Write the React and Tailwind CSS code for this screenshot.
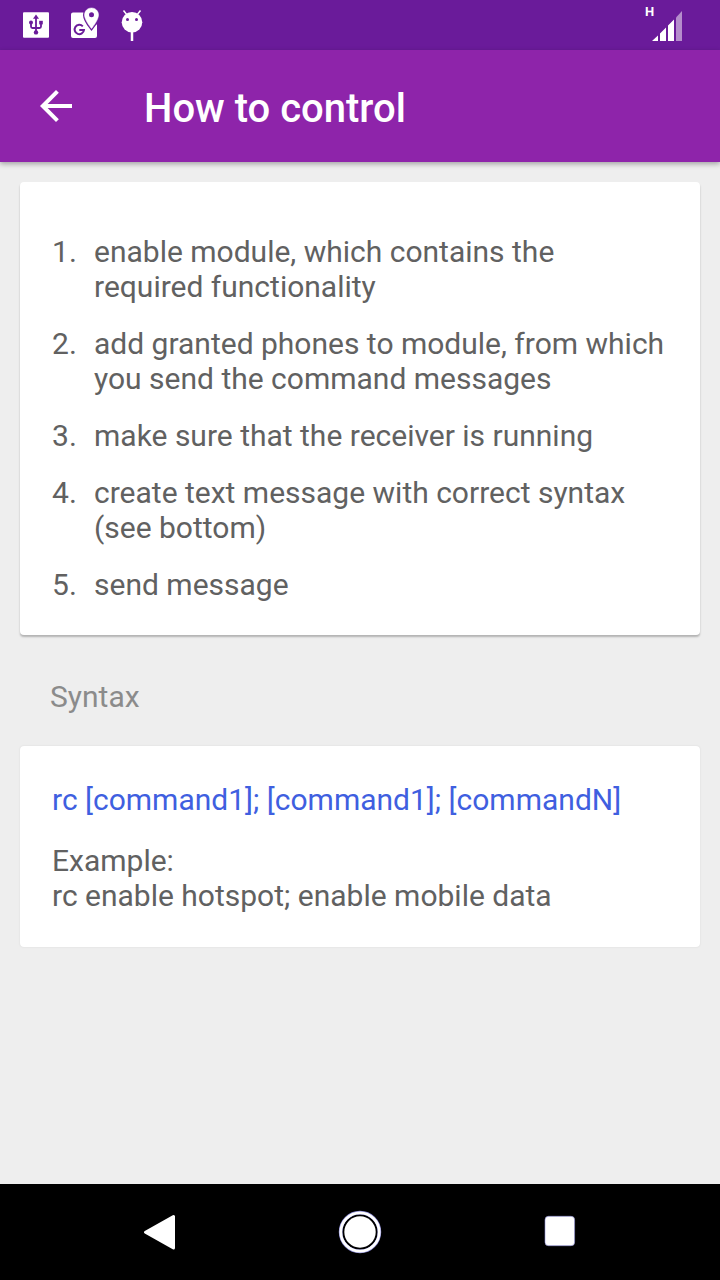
const steps = [
  ['enable module, which contains the', 'required functionality'],
  ['add granted phones to module, from which', 'you send the command messages'],
  ['make sure that the receiver is running'],
  ['create text message with correct syntax', '(see bottom)'],
  ['send message'],
];

const pin = 'M91.5 8c-4 0-7 3-7 7 0 5 7 13.600 7 13.600s7-8.600 7-13.600c0-4-3-7-7-7z';

function StatusBar() {
  return (
    <div className="flex h-[50px] shrink-0 justify-between bg-[#6a1b9a]">
      <svg width="160" height="50" viewBox="0 0 160 50" fill="none">
        <rect x="23" y="12.3" width="26" height="25.5" rx="1" fill="#fff" />
        <g stroke="#6a1b9a" strokeWidth="1.8">
          <path d="M36 17v15M31 23v3.5q0 1.5 1.5 1.5h7q1.5 0 1.5-1.5V23" />
        </g>
        <g fill="#6a1b9a">
          <path d="M36 14.5l3 4.200h-6z" />
          <circle cx="36" cy="32.400" r="2.200" />
          <circle cx="31" cy="22.600" r="2" />
          <rect x="39.200" y="20.800" width="3.600" height="3.600" />
        </g>
        <path d="M73 12.500h16v12h8v11.500q0 2-2 2H73q-2 0-2-2v-21.500q0-2 2-2z" fill="#fff" />
        <path d="M82.800 26.300a4.700 4.700 0 1 0 1.200 3.700h-4.700" stroke="#6a1b9a" strokeWidth="2" />
        <path d={pin} fill="#6a1b9a" stroke="#6a1b9a" strokeWidth="3" />
        <path d={pin} fill="#fff" stroke="#fff" strokeWidth="0.500" />
        <circle cx="91.500" cy="14.800" r="2.500" fill="#6a1b9a" />
        <path d="M123.500 10.500l3.200 4M140.500 10.500l-3.200 4" stroke="#fff" strokeWidth="1.500" />
        <path d="M132 32v9" stroke="#fff" strokeWidth="2.500" />
        <circle cx="132" cy="22.300" r="10.300" fill="#fff" />
        <circle cx="127.500" cy="19.600" r="1.500" fill="#6a1b9a" />
        <circle cx="136.500" cy="19.600" r="1.500" fill="#6a1b9a" />
      </svg>
      <div className="flex w-[75px]">
        <span className="h-3 w-[7px] font-['Roboto',sans-serif] text-[13px] leading-[23px] font-bold text-white">H</span>
        <svg width="32" height="50" viewBox="0 0 32 50">
          <path d="M0 41L6 35.500V41z" fill="#fff" />
          <path d="M8 41v-7.500l6-6V41zM16 41V25.500l6-6V41z" fill="#fff" />
          <path d="M24 41V17.500l6-6.500v30z" fill="#b58dcc" />
        </svg>
      </div>
    </div>
  );
}

export default function App() {
  return (
    <div className="flex h-[1280px] w-[720px] flex-col bg-[#eeeeee] font-['Roboto',sans-serif] text-[30px] leading-[35.2px] text-[#616161]">
      <StatusBar />
      <header className="flex h-28 shrink-0 items-center bg-[#8e24aa] pl-10 shadow-[0_2px_5px_rgba(0,0,0,0.32)]">
        <svg width="32" height="32" viewBox="4 4 16 16" fill="#fff">
          <path d="M20 11H7.830l5.590-5.590L12 4l-8 8 8 8 1.410-1.410L7.830 13H20v-2z" />
        </svg>
        <h1 className="ml-[72px] pt-1.5 text-[40px] leading-[48px] font-medium text-white">How to control</h1>
      </header>
      <main className="flex grow flex-col px-5 pt-5">
        <section className="h-[453px] rounded-[4px] bg-white px-8 pt-[52px] shadow-[0_2px_2px_rgba(0,0,0,0.25)]">
          <ol className="flex flex-col gap-[21.7px]">
            {steps.map((lines, i) => (
              <li key={lines[0]} className="flex whitespace-nowrap">
                <span className="w-[42px] shrink-0">{i + 1}.</span>
                <div>
                  {lines.map((line) => <p key={line}>{line}</p>)}
                </div>
              </li>
            ))}
          </ol>
        </section>
        <h2 className="mt-11 pl-[30px] text-[#8b8b8b]">Syntax</h2>
        <section className="mt-[32px] h-[201px] rounded-[4px] bg-white px-8 pt-9 whitespace-nowrap shadow-[0_0_2px_rgba(0,0,0,0.1)]">
          <p className="text-[#3f5fe0]">rc [command1]; [command1]; [commandN]</p>
          <p className="mt-[25.6px] leading-[35px]">Example:</p>
          <p className="leading-[35px]">rc enable hotspot; enable mobile data</p>
        </section>
      </main>
      <nav className="flex h-24 shrink-0 bg-black">
        <svg width="720" height="96" viewBox="0 0 720 96" fill="#fff">
          <path d="M145.500 48.200L173.500 32.500V64z" stroke="#fff" strokeWidth="3" strokeLinejoin="round" />
          <circle cx="360" cy="48" r="19.400" fill="none" stroke="#8f8fd8" strokeWidth="3.600" />
          <circle cx="360" cy="48" r="19.200" fill="none" stroke="#fff" strokeWidth="2.800" />
          <circle cx="360" cy="48" r="15.700" />
          <rect x="545" y="32.300" width="29.600" height="29.400" rx="3.500" stroke="#8f8fd8" strokeWidth="0.600" />
        </svg>
      </nav>
    </div>
  );
}
